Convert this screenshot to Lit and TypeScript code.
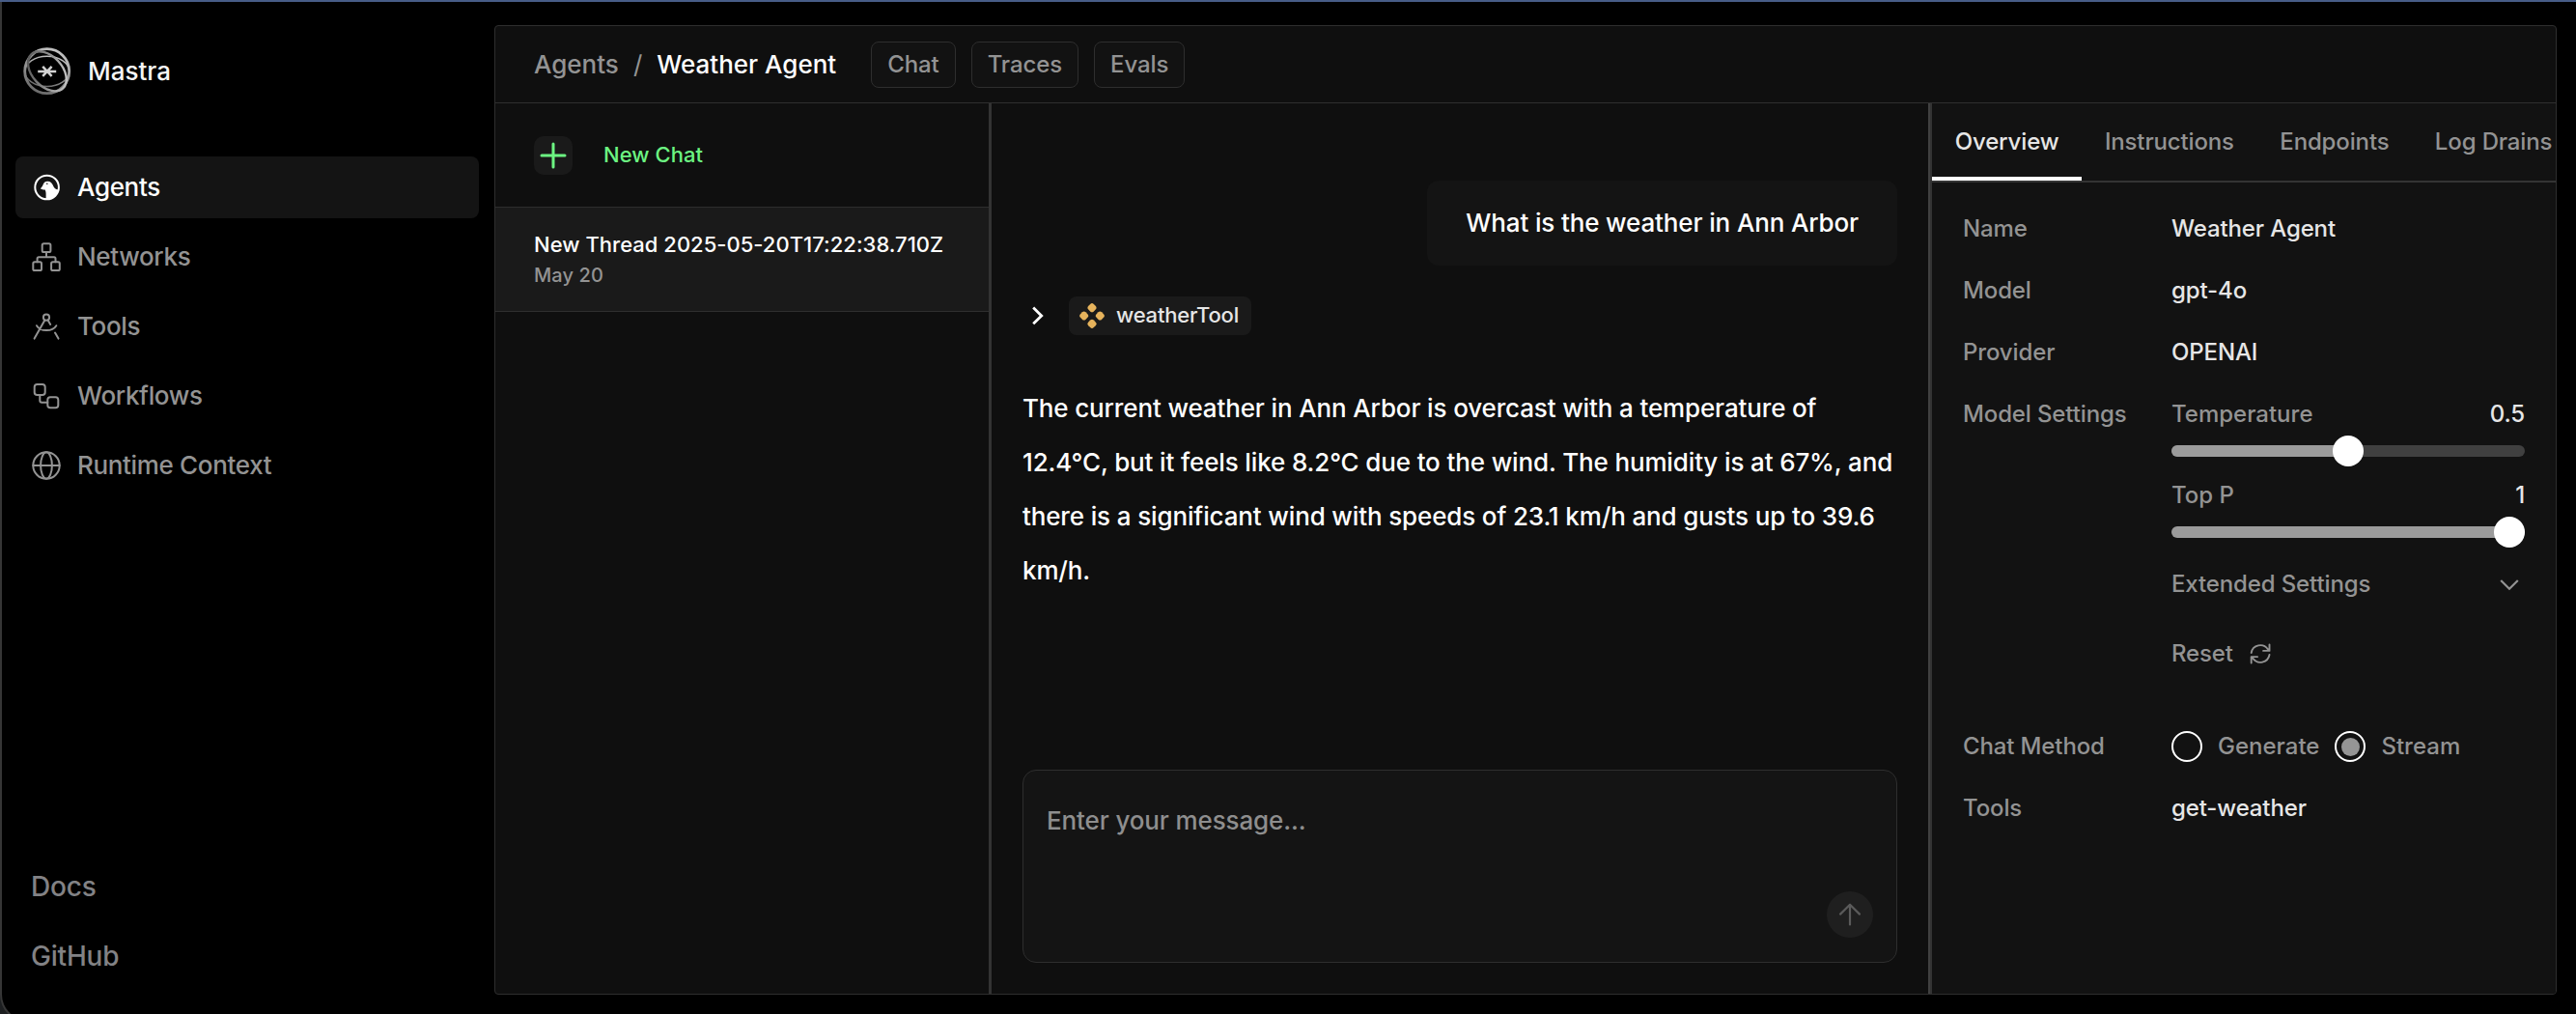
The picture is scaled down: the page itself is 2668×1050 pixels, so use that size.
import { LitElement, html, css, svg } from "lit";
import { customElement } from "lit/decorators.js";

const icons = {
  agents: svg`<circle cx="16.6" cy="16" r="12.3" stroke-width="2"/><path fill="currentColor" stroke="none" d="M10 17.2 C11.4 15.8 12.3 14.6 12.9 12.6 C13.6 10.6 15.2 9.6 17.3 9.7 C20.3 9.8 21.8 11.3 22.8 13.8 C23.8 16.4 25.2 18.2 28.4 18.6 C27.4 24.2 22.6 28.6 15.6 28.6 L15.6 22.4 C15.6 20.6 15.2 19.2 14.2 18.2 C12.8 18.6 11 18.4 10 17.2Z"/><circle cx="16.8" cy="12.3" r="0.8" fill="#141414" stroke="none"/>`,
  networks: svg`<rect x="11.7" y="2.3" width="8.7" height="8.7" rx="1.6"/><rect x="2.3" y="21.3" width="8.7" height="8.7" rx="1.6"/><rect x="21.1" y="21.3" width="8.7" height="8.7" rx="1.6"/><path d="M16 11v5.2M6.6 21.3v-3.6a1.5 1.5 0 0 1 1.5-1.5h15.9a1.5 1.5 0 0 1 1.5 1.5v3.6"/>`,
  tools: svg`<circle cx="16" cy="6.7" r="3.1"/><path d="M14.4 9.6 3.6 28.6M17.6 9.6l2.6 4.4M25 22.6l3.5 6M6 15.2c2 3.2 5.8 4.9 10.1 4.9 4.3 0 8.2-1.7 10.2-4.9"/>`,
  workflows: svg`<rect x="3.7" y="4" width="11" height="11" rx="2.8"/><rect x="17.3" y="17.3" width="11" height="11" rx="2.8"/><path d="M9.3 15v5.7a2 2 0 0 0 2 2h6"/>`,
  globe: svg`<circle cx="16" cy="16" r="13.7"/><ellipse cx="16" cy="16" rx="5.9" ry="13.7"/><path d="M2.3 16h27.4"/>`,
};

const NAV = [
  { label: "Agents", icon: icons.agents, active: true },
  { label: "Networks", icon: icons.networks },
  { label: "Tools", icon: icons.tools },
  { label: "Workflows", icon: icons.workflows },
  { label: "Runtime Context", icon: icons.globe },
];

@customElement("app-sidebar")
class AppSidebar extends LitElement {
  static styles = css`
    :host { display: flex; flex-direction: column; width: 480px; padding: 0 16px 10px 14px; box-sizing: content-box; }
    .brand { display: flex; align-items: center; gap: 17px; height: 96px; padding: 0 0 0 8px; box-sizing: border-box; color: #f5f5f5; font-weight: 500; margin-bottom: 40px; font-size: 26px; }
    .brand span { padding-bottom: 2px; }
    .logo { width: 50px; height: 50px; display: block; }
    .nav { display: flex; flex-direction: column; gap: 8px; }
    .item { display: flex; align-items: center; gap: 16px; height: 64px; padding-left: 16px; border-radius: 8px; font-size: 26px; font-weight: 500; letter-spacing: -0.34px; color: #939393; }
    .item span { padding-bottom: 1px; }
    .item svg { width: 32px; height: 32px; fill: none; stroke: currentColor; stroke-width: 2; stroke-linecap: round; stroke-linejoin: round; }
    .active { background: #141414; color: #fff; }
    .foot { margin-top: auto; display: flex; flex-direction: column; gap: 8px; }
    .link { height: 64px; line-height: 64px; padding-left: 16px; font-size: 28px; font-weight: 500; letter-spacing: -0.2px; color: #828285; }
  `;
  render() {
    return html`
      <div class="brand">
        <svg class="logo" viewBox="0 0 50 50" fill="none">
          <defs>
            <linearGradient id="ring" x1="0.7" y1="0" x2="0.3" y2="1"><stop offset="0" stop-color="#c4c4c4"/><stop offset="1" stop-color="#6a6a6a"/></linearGradient>
            <linearGradient id="arc" x1="1" y1="0.1" x2="0" y2="0.7"><stop offset="0" stop-color="#cfcfcf"/><stop offset="1" stop-color="#5a5a5a"/></linearGradient>
          </defs>
          <circle cx="24.7" cy="24.7" r="23" stroke="url(#ring)" stroke-width="2.8"/>
          <ellipse cx="24.7" cy="24.9" rx="23" ry="15.6" stroke="url(#ring)" stroke-width="1.6"/>
          <ellipse cx="24.9" cy="24.8" rx="24" ry="15.5" transform="rotate(47 24.9 24.8)" stroke="url(#arc)" stroke-width="2.4"/>
          <path d="M15.2 24.9h19M20.2 19.9l9.4 10M29.6 19.9l-9.4 10" stroke="#d2d2d2" stroke-width="2.5"/>
        </svg>
        <span>Mastra</span>
      </div>
      <nav class="nav">
        ${NAV.map((n) => html`<div class="item ${n.active ? "active" : ""}"><svg viewBox="0 0 32 32">${n.icon}</svg><span>${n.label}</span></div>`)}
      </nav>
      <div class="foot"><div class="link">Docs</div><div class="link">GitHub</div></div>
    `;
  }
}

@customElement("thread-list")
class ThreadList extends LitElement {
  static styles = css`
    :host { display: block; width: 511px; font-size: 22px; font-weight: 500; }
    .new { display: flex; align-items: center; gap: 32px; height: 107px; padding-left: 40px; border-bottom: 1px solid #2e2e2e; color: #6cf582; letter-spacing: 0.05px; }
    .new span { padding-bottom: 1px; }
    .plus { width: 40px; height: 40px; border-radius: 10px; background: #1a1a1a; display: block; }
    .thread { height: 107px; padding: 22px 0 0 40px; box-sizing: border-box; background: #1a1a1a; color: #fff; letter-spacing: 0.02px; }
    .title { line-height: 32px; }
    .date { line-height: 32px; font-size: 20px; color: #939393; letter-spacing: 0.1px; }
    .rule { height: 1px; background: #2e2e2e; }
  `;
  render() {
    return html`
      <div class="new">
        <svg class="plus" viewBox="0 0 40 40"><path d="M20 8v24M8 20h24" stroke="#6cf582" stroke-width="3" stroke-linecap="round"/></svg>
        <span>New Chat</span>
      </div>
      <div class="thread">
        <div class="title">New Thread 2025-05-20T17:22:38.710Z</div>
        <div class="date">May 20</div>
      </div>
      <div class="rule"></div>
    `;
  }
}

@customElement("chat-pane")
class ChatPane extends LitElement {
  static styles = css`
    :host { display: flex; flex-direction: column; flex: 1; min-width: 0; padding: 80px 32px 32px; box-sizing: border-box; color: #fff; font-size: 26px; font-weight: 500; line-height: 56px; letter-spacing: -0.14px; }
    .bubble { align-self: flex-end; padding: 16px 40px; border-radius: 12px; background: #141414; }
    .call { display: flex; align-items: center; gap: 14px; height: 40px; margin: 32px 0 48px; }
    .chev { width: 34px; height: 34px; }
    .badge { display: flex; align-items: center; gap: 12px; height: 40px; padding: 0 13px 0 11px; border-radius: 8px; background: #1a1a1a; color: #e6e6e6; font-size: 22px; line-height: 38px; letter-spacing: -0.2px; }
    .badge svg { width: 26px; height: 26px; fill: #e6b35c; }
    .badge span { padding-bottom: 2px; }
    .answer { margin: 0; }
    .composer { margin-top: auto; height: 200px; box-sizing: border-box; border: 1px solid #2e2e2e; border-radius: 14px; background: #141414; padding: 24px 24px 25px; display: flex; flex-direction: column; justify-content: space-between; }
    .hint { color: #8e8e8e; letter-spacing: -0.13px; }
    .send { align-self: flex-end; width: 48px; height: 48px; border-radius: 50%; background: #1f1f1f; flex: none; }
  `;
  render() {
    return html`
      <div class="bubble">What is the weather in Ann Arbor</div>
      <div class="call">
        <svg class="chev" viewBox="0 0 34 34" fill="none"><path d="M11.2 8.6l8.5 8.3-8.5 8.3" stroke="#fff" stroke-width="2.8"/></svg>
        <div class="badge">
          <svg viewBox="0 0 26 26">
            ${[[13, 4.7], [4.7, 13], [21.3, 13], [13, 21.3]].map(([x, y]) => svg`<rect x=${x - 3.9} y=${y - 3.9} width="7.8" height="7.8" rx="2.6" transform=${`rotate(45 ${x} ${y})`}/>`)}
          </svg>
          <span>weatherTool</span>
        </div>
      </div>
      <p class="answer">The current weather in Ann Arbor is overcast with a temperature of 12.4°C, but it feels like 8.2°C due to the wind. The humidity is at 67%, and there is a significant wind with speeds of 23.1 km/h and gusts up to 39.6 km/h.</p>
      <div class="composer">
        <div class="hint">Enter your message...</div>
        <svg class="send" viewBox="0 0 48 48" fill="none"><path d="M24 34.5V14M14 23.6 24 13.7l10 9.9" stroke="#5a5a5a" stroke-width="2.2" stroke-linecap="round" stroke-linejoin="round"/></svg>
      </div>
    `;
  }
}

@customElement("agent-panel")
class AgentPanel extends LitElement {
  static styles = css`
    :host { display: block; width: 646px; overflow: hidden; background: #121212; font-size: 24px; font-weight: 500; line-height: 32px; color: #939393; }
    .tabs { display: flex; height: 80px; border-bottom: 2px solid #343434; white-space: nowrap; letter-spacing: -0.14px; }
    .tab { padding: 24px 23.7px 20px; border-bottom: 4px solid transparent; box-sizing: border-box; flex: none; }
    .on { color: #e6e6e6; border-bottom-color: #fff; }
    .grid { display: grid; grid-template-columns: 216px 366px; row-gap: 32px; padding: 32px 32px 0; letter-spacing: -0.13px; }
    .val { color: #e6e6e6; }
    .pair { display: flex; justify-content: space-between; }
    .med { letter-spacing: 0; }
    .slider { display: flex; align-items: center; height: 32px; margin: 6px 0 14px; position: relative; }
    .track { flex: 1; height: 12px; border-radius: 6px; background: #404040; overflow: hidden; }
    .fill { height: 100%; background: #9b9b9b; }
    .thumb { position: absolute; width: 32px; height: 32px; border-radius: 50%; background: #fff; }
    .ext { margin-top: 22px; align-items: center; }
    .ext svg { width: 32px; height: 32px; }
    .reset { display: flex; align-items: center; gap: 14px; margin: 40px 0 32px; }
    .reset svg { width: 28px; height: 28px; }
    .radios { display: flex; align-items: center; gap: 16px; }
    .radio { width: 32px; height: 32px; box-sizing: border-box; border: 2px solid #fff; border-radius: 50%; display: grid; place-items: center; flex: none; }
    .dot { width: 19px; height: 19px; border-radius: 50%; background: #959595; }
  `;
  private slider(label: string, value: string, pct: number) {
    return html`
      <div class="pair"><span class="med">${label}</span><span class="val">${value}</span></div>
      <div class="slider">
        <div class="track"><div class="fill" style="width:${pct}%"></div></div>
        <div class="thumb" style="left:calc((100% - 32px) * ${pct / 100})"></div>
      </div>`;
  }
  render() {
    return html`
      <div class="tabs">
        ${["Overview", "Instructions", "Endpoints", "Log Drains"].map((t, i) => html`<div class="tab ${i ? "" : "on"}">${t}</div>`)}
      </div>
      <div class="grid">
        <span>Name</span><span class="val">Weather Agent</span>
        <span>Model</span><span class="val">gpt-4o</span>
        <span>Provider</span><span class="val">OPENAI</span>
        <span>Model Settings</span>
        <div>
          ${this.slider("Temperature", "0.5", 50)}
          ${this.slider("Top P", "1", 100)}
          <div class="pair ext"><span>Extended Settings</span>
            <svg viewBox="0 0 32 32" fill="none" stroke="#939393" stroke-width="2.2"><path d="M7.2 12l8.8 8.8 8.8-8.8"/></svg>
          </div>
          <div class="reset"><span>Reset</span>
            <svg viewBox="0 0 28 28" fill="none" stroke="#939393" stroke-width="1.9" stroke-linecap="round" stroke-linejoin="round"><path d="M4.7 13A9.5 9.5 0 0 1 21.8 9.2L23.2 10.8M23.5 4.5v6.4h-6.4M23.5 15A9.5 9.5 0 0 1 6.4 18.8L5 17.2M4.7 23.5v-6.4h6.4"/></svg>
          </div>
        </div>
        <span>Chat Method</span>
        <div class="radios med">
          <div class="radio"></div><span>Generate</span>
          <div class="radio"><div class="dot"></div></div><span>Stream</span>
        </div>
        <span>Tools</span><span class="val">get-weather</span>
      </div>
    `;
  }
}

@customElement("app-root")
class AppRoot extends LitElement {
  static styles = css`
    :host { display: block; height: 1050px; overflow: hidden; background: #1d1f21; font-family: Inter, "Liberation Sans", sans-serif; font-size: 26px; -webkit-font-smoothing: antialiased; }
    .window { display: flex; box-sizing: border-box; height: 1056px; padding: 24px 20px 24px 0; border: solid #363636; border-width: 0 0 2px 2px; border-radius: 0 0 0 28px; background: #000; }
    .strip { height: 2px; background: #475d88; }
    .card { display: flex; flex-direction: column; flex: 1; height: 1004px; box-sizing: border-box; border: 1px solid #2e2e2e; border-radius: 4px; background: #0f0f0f; overflow: hidden; }
    .head { display: flex; align-items: center; height: 79px; border-bottom: 1px solid #2e2e2e; padding-left: 40px; color: #939393; font-weight: 500; flex: none; }
    .slash { margin: 0 15px 0 15px; font-weight: 400; }
    .name { color: #fff; margin-right: 36px; }
    .pills { display: flex; gap: 16px; font-size: 24px; font-weight: 500; letter-spacing: -0.1px; }
    .pill { height: 48px; line-height: 46px; padding: 0 16px; box-sizing: border-box; border: 1px solid #2e2e2e; border-radius: 8px; background: #121212; }
    .body { display: flex; flex: 1; min-height: 0; }
    .split { width: 3px; background: #333; flex: none; }
    .wide { width: 4px; box-sizing: border-box; border-left: 2px solid #404040; }
  `;
  render() {
    return html`
      <div class="strip"></div>
      <div class="window">
        <app-sidebar></app-sidebar>
        <main class="card">
          <header class="head">
            <span>Agents</span><span class="slash">/</span><span class="name">Weather Agent</span>
            <div class="pills"><div class="pill">Chat</div><div class="pill">Traces</div><div class="pill">Evals</div></div>
          </header>
          <div class="body">
            <thread-list></thread-list>
            <div class="split"></div>
            <chat-pane></chat-pane>
            <div class="split wide"></div>
            <agent-panel></agent-panel>
          </div>
        </main>
      </div>
    `;
  }
}
